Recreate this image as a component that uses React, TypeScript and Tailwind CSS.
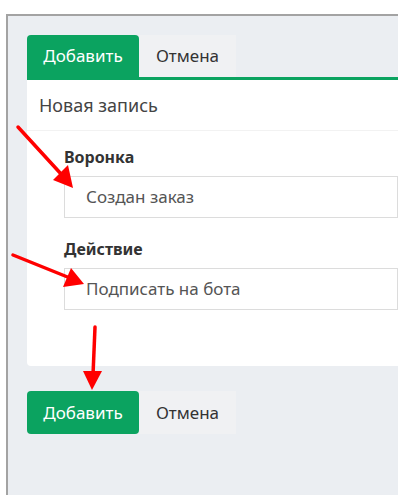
import React from "react";

function Field({ label, value }: { label: string; value: string }) {
  return (
    <div className="flex flex-col">
      <div className="pb-[7px] text-[16px] font-bold leading-[24px] text-[#333]">{label}</div>
      <div className="flex h-[42px] items-center border border-[#dcdcdc] pl-[21px] text-[17px] text-[#555]">{value}</div>
    </div>
  );
}

export default function App() {
  return (
    <div className="relative h-[495px] w-[398px] overflow-hidden bg-white pt-[14px] pl-[6px]" style={{ fontFamily: '"Noto Sans", "Open Sans", sans-serif' }}>
      <div className="h-full border-t-2 border-l-2 border-[#a3a3a3] bg-[#ebeef2] pl-[19px] pt-[19px]">
        <div className="flex">
          <button className="h-[42px] w-[112px] rounded-t-[4px] bg-[#0ba360] text-[17px] text-white">Добавить</button>
          <button className="h-[42px] w-[97px] bg-[#f0f1f3] text-[17px] text-[#333]">Отмена</button>
        </div>
        <div className="rounded-bl-[4px] border-t-[3px] border-[#0ba360] bg-white">
          <div className="flex h-[51px] items-center border-b border-[#f2f2f2] pl-[12px] text-[18px] text-[#444]">Новая запись</div>
          <div className="flex flex-col gap-[19px] pt-[14px] pb-[56px] pl-[37px]">
            <Field label="Воронка" value="Создан заказ" />
            <Field label="Действие" value="Подписать на бота" />
          </div>
        </div>
        <div className="pt-[25px]">
          <div className="flex">
            <button className="h-[43px] w-[112px] rounded-[4px] bg-[#0ba360] text-[17px] text-white">Добавить</button>
            <button className="h-[43px] w-[97px] bg-[#f0f1f3] text-[17px] text-[#333]">Отмена</button>
          </div>
        </div>
      </div>
      <svg className="pointer-events-none absolute inset-0" width="398" height="495">
        <g stroke="#f00" strokeWidth="3.5" strokeLinecap="round">
          <line x1="18" y1="127" x2="62" y2="175" />
          <line x1="13" y1="255" x2="70" y2="278" />
          <line x1="95" y1="327" x2="93" y2="375" />
        </g>
        <g fill="#f00">
          <polygon points="73,188 53,180 68,165" />
          <polygon points="84,284 63,287 71,268" />
          <polygon points="92,390 83,371 102,371" />
        </g>
      </svg>
    </div>
  );
}
